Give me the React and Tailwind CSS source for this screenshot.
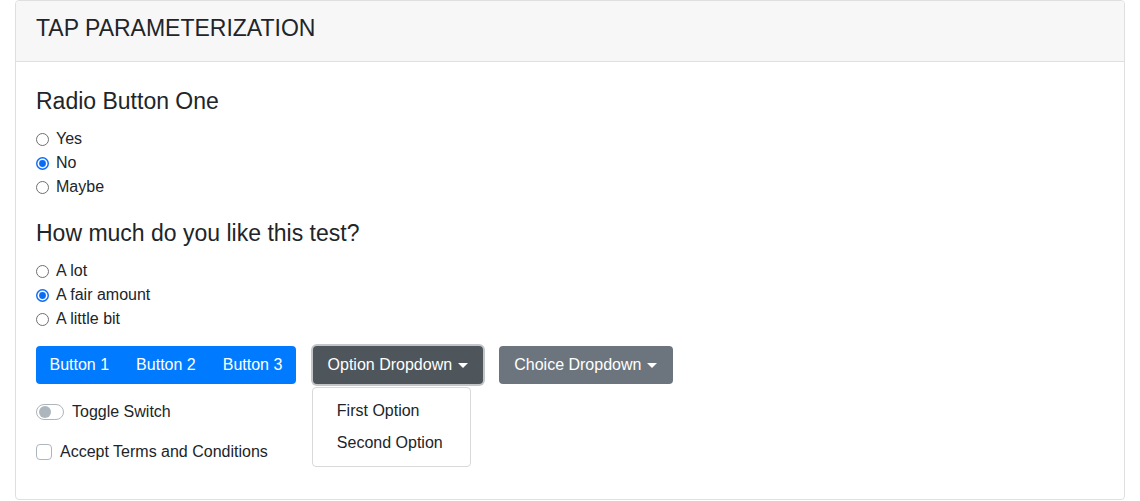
import { useState } from "react";

const Radio = ({ checked, label }) => (
  <label className="flex items-center h-6 text-base text-[#212529]">
    {checked ? (
      <svg width="13" height="13" viewBox="0 0 13 13" className="shrink-0">
        <circle cx="6.5" cy="6.5" r="6.5" fill="#0a6cf5" />
        <circle cx="6.5" cy="6.5" r="5" fill="#fff" />
        <circle cx="6.5" cy="6.5" r="3.4" fill="#0a6cf5" />
      </svg>
    ) : (
      <svg width="13" height="13" viewBox="0 0 13 13" className="shrink-0">
        <circle cx="6.5" cy="6.5" r="6" fill="#fff" stroke="#6f6f6f" strokeWidth="1" />
      </svg>
    )}
    <span className="ml-[7px]">{label}</span>
  </label>
);

const Caret = () => (
  <span className="ml-[6px] inline-block w-0 h-0 border-t-[5px] border-t-white border-x-[5px] border-x-transparent" />
);

export default function App() {
  const [open] = useState(true);

  return (
    <div className="px-[15px] bg-white" style={{ fontFamily: '"Liberation Sans", Arial, sans-serif' }}>
      <div className="border border-[#dfdfdf] rounded-[4px] text-[#212529]">
        {/* header */}
        <div className="h-[61px] flex items-center px-5 pb-[7px] bg-[#f7f7f7] border-b border-[#dfdfdf] rounded-t-[4px]">
          <h2 className="text-[23px] leading-[26px]">TAP PARAMETERIZATION</h2>
        </div>

        {/* body */}
        <div className="px-5 pt-[26px] pb-[35px]">
          <h3 className="text-[23px] leading-[26px] mb-[13px]">Radio Button One</h3>
          <Radio label="Yes" />
          <Radio label="No" checked />
          <Radio label="Maybe" />

          <h3 className="text-[23px] leading-[26px] mt-[21px] mb-[13px]">How much do you like this test?</h3>
          <Radio label="A lot" />
          <Radio label="A fair amount" checked />
          <Radio label="A little bit" />

          <div className="flex items-start mt-[15px]">
            <div className="flex h-[38px] rounded-[4px] bg-[#007bff] text-white text-base">
              <button className="px-[13.5px]">Button 1</button>
              <button className="px-[13.5px]">Button 2</button>
              <button className="px-[13.5px]">Button 3</button>
            </div>

            <div className="relative ml-[17px]">
              <button className="h-[38px] w-[170px] flex items-center justify-center rounded-[4px] bg-[#4e555b] text-white text-base shadow-[0_0_0_2px_#c3c6c9]">
                Option Dropdown
                <Caret />
              </button>
              {open && (
                <ul className="absolute left-[-1px] top-[41px] w-[159px] h-[80px] py-[7px] bg-white border border-[#d9d9d9] rounded-[4px] text-base">
                  <li className="h-8 flex items-center px-6">First Option</li>
                  <li className="h-8 flex items-center px-6">Second Option</li>
                </ul>
              )}
            </div>

            <button className="ml-4 h-[38px] w-[174px] flex items-center justify-center rounded-[4px] bg-[#6c757d] text-white text-base">
              Choice Dropdown
              <Caret />
            </button>
          </div>

          <div className="flex items-center h-6 mt-4">
            <span className="relative w-7 h-4 rounded-full border border-[#adb5bd] bg-white shrink-0">
              <span className="absolute left-[2px] top-[1px] w-3 h-3 rounded-full bg-[#adb5bd]" />
            </span>
            <span className="ml-2 text-base">Toggle Switch</span>
          </div>

          <div className="flex items-center h-6 mt-4">
            <span className="w-4 h-4 rounded-[4px] border border-[#adb5bd] bg-white shrink-0" />
            <span className="ml-2 text-base">Accept Terms and Conditions</span>
          </div>
        </div>
      </div>
    </div>
  );
}
